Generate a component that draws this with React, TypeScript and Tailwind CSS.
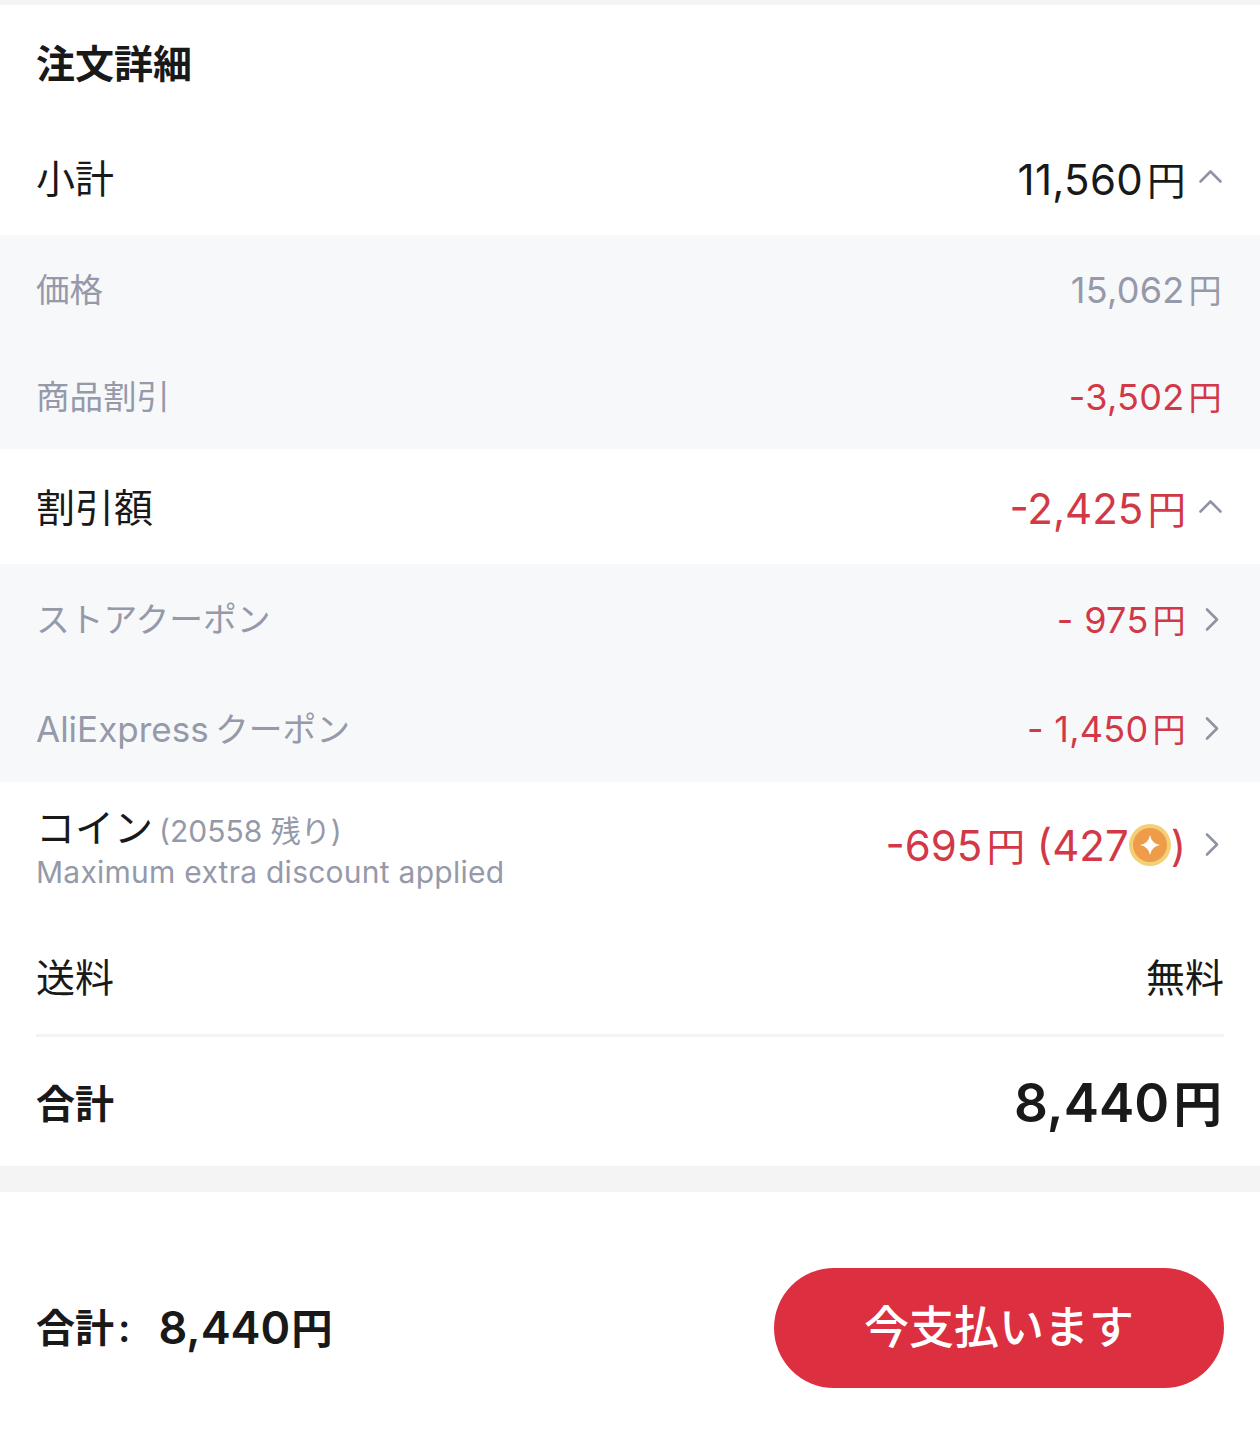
import type { ReactNode } from "react";

const font = "font-['Inter','Noto_Sans_CJK_JP',sans-serif]";

const Yen = () => <span className="ml-[4px] text-[0.92em]">円</span>;

const ChevronUp = () => (
  <svg className="w-[26px] h-[26px] ml-[12px]" viewBox="0 0 26 26" fill="none" stroke="#8f93a3" strokeWidth="2.6" strokeLinecap="round" strokeLinejoin="round">
    <path d="M2.5 15.5 L12.5 5.5 L22.5 15.5" />
  </svg>
);

const ChevronRight = () => (
  <svg className="w-[16px] h-[26px] ml-[18px] mr-[4px]" viewBox="0 0 16 26" fill="none" stroke="#8f93a3" strokeWidth="2.6" strokeLinecap="round" strokeLinejoin="round">
    <path d="M3 2.5 L13 12.5 L3 22.5" />
  </svg>
);

const Coin = () => (
  <svg className="w-[42px] h-[42px]" viewBox="0 0 42 42">
    <circle cx="21" cy="21" r="21" fill="#f3cf75" />
    <circle cx="21" cy="21" r="17" fill="#ee9c4a" />
    <path d="M21 11 Q22.5 19.5 31 21 Q22.5 22.5 21 31 Q19.5 22.5 11 21 Q19.5 19.5 21 11Z" fill="#fff" />
  </svg>
);

const Row = ({ label, value, tone }: { label: string; value: string; tone: "gray" | "red" }) => (
  <div className="h-[107px] pt-[4px] flex items-center justify-between">
    <span className="text-[33.5px] text-[#9599a9]">{label}</span>
    <span className={tone === "red" ? "mr-[2px] mb-[2px] text-[36px] tracking-[0.3px] text-[#d23848]" : "mr-[2px] mb-[2px] text-[36px] tracking-[0.3px] text-[#9599a9]"}>
      {value}
      <Yen />
    </span>
  </div>
);

const CouponRow = ({ label, value }: { label: ReactNode; value: string }) => (
  <div className="h-[109px] pt-[4px] flex items-center justify-between">
    <span className="text-[33.75px] text-[#9599a9]">{label}</span>
    <span className="mb-[2px] flex items-center text-[36px] tracking-[0.3px] text-[#d23848]">
      <span>
        {value}
        <Yen />
      </span>
      <ChevronRight />
    </span>
  </div>
);

export default function App() {
  return (
    <div className={`${font} w-[1260px] h-[1443px] bg-white text-[#191919] overflow-hidden`}>
      <div className="h-[5px] bg-[#f4f4f4]" />

      <div className="h-[118px] px-[36px] flex items-center">
        <h2 className="text-[39px] font-bold">注文詳細</h2>
      </div>

      <div className="h-[112px] px-[36px] flex items-center justify-between">
        <span className="text-[39px]">小計</span>
        <span className="flex items-center text-[42px] tracking-[0.3px]">
          <span>
            11,560
            <Yen />
          </span>
          <ChevronUp />
        </span>
      </div>

      <div className="h-[214px] bg-[#f7f8fa] px-[36px]">
        <Row label="価格" value="15,062" tone="gray" />
        <Row label="商品割引" value="-3,502" tone="red" />
      </div>

      <div className="h-[115px] pt-[4px] px-[36px] flex items-center justify-between">
        <span className="text-[39px]">割引額</span>
        <span className="flex items-center text-[42px] text-[#d23848]">
          <span>
            -2,425
            <Yen />
          </span>
          <ChevronUp />
        </span>
      </div>

      <div className="h-[218px] bg-[#f7f8fa] px-[36px]">
        <CouponRow label="ストアクーポン" value="- 975" />
        <CouponRow
          label={
            <>
              <span className="text-[35px] mr-[-3px]">AliExpress</span> クーポン
            </>
          }
          value="- 1,450"
        />
      </div>

      <div className="h-[130px] px-[36px] flex items-center justify-between">
        <div className="flex flex-col">
          <div className="flex items-baseline leading-[46px]">
            <span className="text-[39px]">コイン</span>
            <span className="ml-[6px] text-[30px] text-[#9599a9]">(20558 残り)</span>
          </div>
          <span className="text-[30px] leading-[36px] tracking-[0.25px] text-[#9599a9]">Maximum extra discount applied</span>
        </div>
        <span className="mb-[4px] flex items-center text-[42px] text-[#d23848]">
          <span>
            -695
            <Yen />
            {" (427"}
          </span>
          <Coin />
          )
          <ChevronRight />
        </span>
      </div>

      <div className="mx-[36px] h-[125px] pt-[11px] flex items-center justify-between border-b-[3px] border-[#f2f3f5]">
        <span className="text-[39px]">送料</span>
        <span className="text-[39px]">無料</span>
      </div>

      <div className="h-[129px] pt-[5px] px-[36px] flex items-center justify-between">
        <span className="text-[39px] font-bold">合計</span>
        <span className="mr-[2px] text-[53px] font-semibold">
          8,440
          <Yen />
        </span>
      </div>

      <div className="h-[26px] bg-[#f4f4f4]" />

      <div className="h-[251px] pt-[76px] px-[36px] flex items-start justify-between">
        <div className="h-[120px] flex items-center font-semibold">
          <span className="text-[39px] mr-[28px]">
            合計<span className="ml-[4px]">:</span>
          </span>
          <span className="text-[45px]">
            8,440
            <span className="ml-[1px] text-[0.92em]">円</span>
          </span>
        </div>
        <button className="w-[450px] h-[120px] rounded-[60px] bg-[#dc2f3f] text-white text-[45px] font-medium">今支払います</button>
      </div>
    </div>
  );
}
